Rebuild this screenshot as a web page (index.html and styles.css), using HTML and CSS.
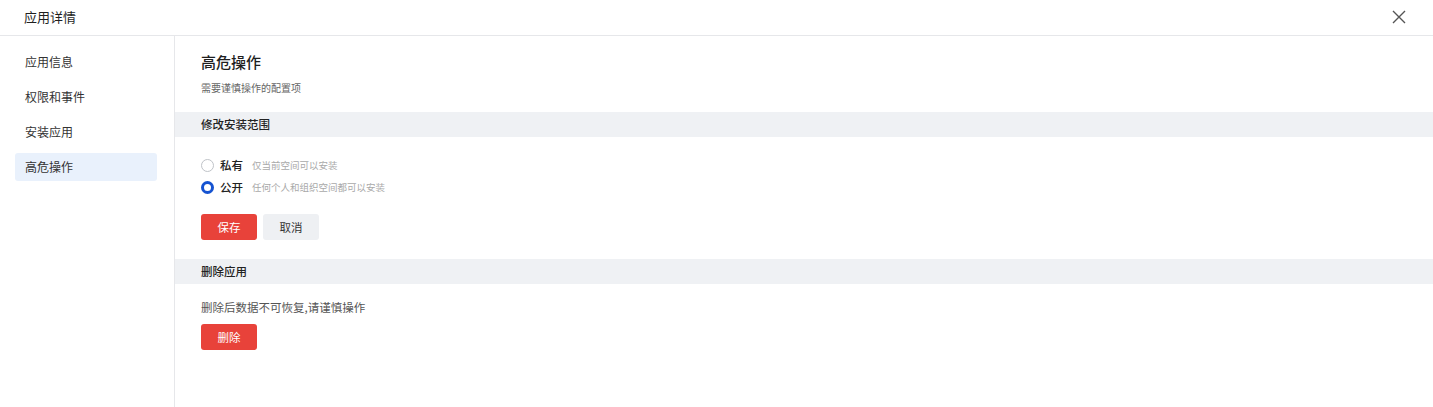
FILE: index.html
```html
<!DOCTYPE html>
<html lang="zh">
<head>
<meta charset="utf-8">
<link rel="stylesheet" href="styles.css">
</head>
<body>
<div class="dialog">
  <header class="header">
    <span class="title">应用详情</span>
    <svg class="close" width="14" height="14" viewBox="0 0 14 14"><path d="M1 1L13 13M13 1L1 13" stroke="#555" stroke-width="1.4" fill="none"/></svg>
  </header>
  <div class="body">
    <nav class="side">
      <div class="nav-item">应用信息</div>
      <div class="nav-item">权限和事件</div>
      <div class="nav-item">安装应用</div>
      <div class="nav-item active">高危操作</div>
    </nav>
    <main class="main">
      <div class="intro">
        <h1 class="h1">高危操作</h1>
        <p class="sub">需要谨慎操作的配置项</p>
      </div>
      <div class="bar">修改安装范围</div>
      <div class="section">
        <div class="radios">
          <label class="radio"><span class="dot"></span><b class="rl">私有</b><span class="hint">仅当前空间可以安装</span></label>
          <label class="radio"><span class="dot on"></span><b class="rl">公开</b><span class="hint">任何个人和组织空间都可以安装</span></label>
        </div>
        <div class="btns">
          <button class="btn red">保存</button>
          <button class="btn gray">取消</button>
        </div>
      </div>
      <div class="bar">删除应用</div>
      <div class="section del">
        <p class="warn">删除后数据不可恢复,请谨慎操作</p>
        <div class="btns"><button class="btn red">删除</button></div>
      </div>
    </main>
  </div>
</div>
</body>
</html>
```
FILE: styles.css
```css
* { box-sizing: border-box; margin: 0; padding: 0; }
html, body { height: 100%; }
body {
  background: #fff;
  font-family: "Noto Sans CJK SC", "Noto Sans", sans-serif;
  color: #222;
}
.dialog { height: 407px; display: flex; flex-direction: column; }
.header {
  height: 36px;
  border-bottom: 1px solid #e6e7ea;
  display: flex;
  align-items: center;
  justify-content: space-between;
  padding: 0 27px 2px 24px;
}
.title { font-size: 13px; color: #1f1f1f; font-weight: 400; }
.close { display: block; }
.body { flex: 1; display: flex; }
.side {
  width: 175px;
  border-right: 1px solid #e6e7ea;
  padding: 12px 17px 0 15px;
  display: flex;
  flex-direction: column;
  gap: 7px;
}
.nav-item {
  height: 28px;
  line-height: 28px;
  padding-left: 10px;
  font-size: 12px;
  color: #333;
  border-radius: 3px;
}
.nav-item.active { background: #e9f1fc; }
.main { flex: 1; display: flex; flex-direction: column; }
.intro { padding: 16px 26px 17px; }
.h1 { font-size: 15px; font-weight: 500; color: #1f1f1f; line-height: 20px; }
.sub { font-size: 10px; color: #666; margin-top: 9px; line-height: 14px; }
.bar {
  height: 25px;
  line-height: 25px;
  background: #eff1f4;
  padding-left: 26px;
  font-size: 11.5px;
  font-weight: 500;
  color: #222;
}
.section { padding: 20px 26px 19px; }
.radios { display: flex; flex-direction: column; gap: 6px; }
.radio { display: flex; align-items: center; height: 16px; }
.dot {
  width: 13px; height: 13px;
  border: 1px solid #bfc3c8;
  border-radius: 50%;
  margin-right: 6px;
  background: #fff;
}
.dot.on { border: 3.5px solid #1553d1; }
.rl { font-size: 11.5px; font-weight: 500; color: #222; margin-right: 9px; }
.hint { font-size: 9.5px; color: #a9a9a9; }
.btns { display: flex; gap: 6px; margin-top: 19px; }
.btn {
  width: 56px; height: 26px;
  border: none; border-radius: 3px;
  font-family: inherit; font-size: 11.5px;
}
.red { background: #e8423a; color: #fff; }
.gray { background: #eef0f3; color: #333; }
.del { padding-top: 15px; }
.warn { font-size: 11.5px; color: #555; line-height: 16px; }
.del .btns { margin-top: 9px; }
```
